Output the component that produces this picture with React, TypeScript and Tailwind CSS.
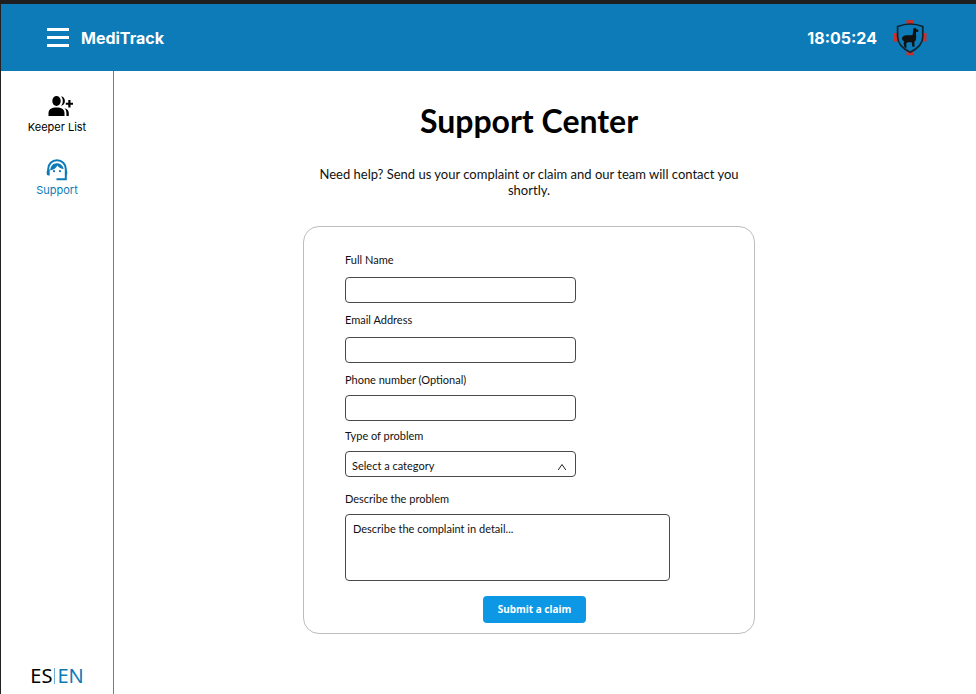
import React from "react";

const bodyFont = "font-[Lato,sans-serif]";
const labelFont = "font-['Noto_Sans',sans-serif]";
const inputStyle =
  "h-[26px] w-[231px] max-w-full rounded-[4px] border border-[#4a4a4a] bg-white px-1.5 text-[11px] text-[#111] outline-none";

function KeeperIcon() {
  return (
    <svg viewBox="0 0 26 22" className="ml-2 h-[22px] w-[26px]" fill="currentColor" aria-hidden="true">
      <ellipse cx="8.500" cy="6" rx="4.200" ry="5" />
      <path d="M.5 21v-3c0-3.800 3.400-5.500 8-5.500s8 1.700 8 5.500v3z" />
      <path d="M13 1.200c2.400.300 3.900 2.300 3.900 4.800s-1.500 4.500-3.900 4.800c1.200-1.200 1.800-2.900 1.800-4.800S14.200 2.400 13 1.200z" />
      <path d="M16.500 13.200c2.900.700 4.300 2.500 4.300 4.800v3h-2.400v-3c0-2-.7-3.600-1.900-4.800z" />
      <path d="M20.300 5h2.200v2.700H25v2.100h-2.500v2.700h-2.200V9.800h-2.500V7.700h2.500z" />
    </svg>
  );
}

function AgentIcon() {
  return (
    <svg viewBox="0 0 24 24" className="size-6" fill="none" stroke="currentColor" aria-hidden="true">
      <path d="M3.200 13.500V11C3.200 6 7 2.200 12 2.200S20.800 6 20.800 11v10.200H11.500" strokeWidth="2" />
      <path d="M3.500 11.500c-1.200.4-1.800 1.300-1.800 2.500v1.500c0 1.200.7 2 1.800 2h1.200v-6zM20.300 11.500c1.200.4 2 1.300 2 2.500v1.500c0 1.200-.8 2-2 2z" fill="currentColor" stroke="none" />
      <path d="M5.200 12.500C5.500 8 8 5.200 11.800 5.200c3.700 0 6.300 2.500 6.900 5.900-2.600 0-4.900-1.300-6.300-3.500-1.200 2.500-3.700 4.400-7.200 4.900z" fill="currentColor" stroke="none" />
      <circle cx="9" cy="13.200" r="1.100" fill="currentColor" stroke="none" />
      <circle cx="15" cy="13.200" r="1.100" fill="currentColor" stroke="none" />
    </svg>
  );
}

function LlamaLogo() {
  return (
    <svg viewBox="0 0 34 36" className="h-9 w-[34px]" role="img" aria-label="MediTrack">
      <path d="M13.500 0h7.500v7h-7.500zM13.500 28h7.500v7.300h-7.500zM1 13h7v8.500H1zM26 13h7.500v8.500H26z" fill="#c9302c" />
      <path
        d="M17.200 4c4.500 0 8.400.9 12.600 2.500v10c0 6.500-4.400 11.800-12.600 15.700C9 28.300 4.600 23 4.600 16.500v-10C8.800 4.900 12.700 4 17.200 4z"
        fill="#0d7bb7"
        stroke="#10242f"
        strokeWidth="1.700"
      />
      <path
        d="M20.900 7.500l.8.900.9-.9.500 1.500 2.400 1.100-.3 1.700-2.200.3c-.2 2.200.6 4.700 0 7.200-.3 1.300-1.100 2.100-1.700 2.900l.3 4.600h-2.100l-.8-4.600h-4l-1.500 1.300.4 4.300h-2l-1-4.400.6-2c-1-.5-2.300-1.600-2.200-2.900.2-2.600 2.200-3.300 4.700-3.300 2.300 0 4.400.4 5.900-.4.600-2.300.1-5.100 1.300-7.300z"
        fill="#111"
      />
    </svg>
  );
}

function Field({
  id,
  label,
  className,
  children,
}: {
  id: string;
  label: string;
  className: string;
  children: React.ReactNode;
}) {
  return (
    <div className={`flex flex-col items-start ${className}`}>
      <label htmlFor={id} className="text-[11px] leading-4 text-[#111]">
        {label}
      </label>
      {children}
    </div>
  );
}

export default function App() {
  return (
    <div className="flex min-h-screen flex-col border-l border-t-4 border-l-[#222] border-t-[#1f1f1f] bg-white font-[Inter,sans-serif] text-black">
      <header className="flex h-[67px] shrink-0 items-center bg-[#0d7bb7] pl-[46px] pr-[49px] text-white">
        <button type="button" aria-label="Open menu" className="mr-3 flex w-[22px] flex-col gap-[5px]">
          <span className="h-[3px] w-full bg-white" />
          <span className="h-[3px] w-full bg-white" />
          <span className="h-[3px] w-full bg-white" />
        </button>
        <span className="text-[16px] font-bold leading-6">MediTrack</span>
        <time className="ml-auto mr-4 text-[16px] font-bold leading-6">18:05:24</time>
        <LlamaLogo />
      </header>

      <div className="flex flex-1">
        <aside className="flex w-[113px] shrink-0 flex-col items-center border-r border-[#3f8fbd] pb-1.5 pt-6">
          <nav className="flex flex-col items-center gap-[23px] text-[11px] leading-4">
            <a href="#keepers" className="flex flex-col items-center gap-0.5">
              <KeeperIcon />
              Keeper List
            </a>
            <a href="#support" className="flex flex-col items-center text-[#0d7bb7]">
              <AgentIcon />
              Support
            </a>
          </nav>
          <div className={`mt-auto flex items-center text-[20px] leading-6 ${labelFont}`}>
            <button type="button">ES</button>
            <span className="mx-0.5 h-4 w-px bg-[#6fb0d6]" />
            <button type="button" className="text-[#0d7bb7]">EN</button>
          </div>
        </aside>

        <main className={`flex flex-1 flex-col items-center pl-4 pr-12 pt-7 ${bodyFont}`}>
          <h1 className="text-[32px] font-bold leading-[44px]">Support Center</h1>
          <p className="mt-[23px] max-w-[451px] text-center text-[13px] leading-4 text-[#111]">
            Need help? Send us your complaint or claim and our team will contact you shortly.
          </p>

          <form
            onSubmit={(e) => e.preventDefault()}
            className="mt-7 flex w-full max-w-[452px] flex-col rounded-2xl border border-[#bdbdbd] pb-2.5 pl-[41px] pr-10 pt-[25px]"
          >
            <Field id="name" label="Full Name" className="gap-[9px]">
              <input id="name" type="text" className={inputStyle} />
            </Field>
            <Field id="email" label="Email Address" className="mt-[9px] gap-[9px]">
              <input id="email" type="email" className={inputStyle} />
            </Field>
            <Field id="phone" label="Phone number (Optional)" className="mt-[9px] gap-[7px]">
              <input id="phone" type="tel" className={inputStyle} />
            </Field>
            <Field id="category" label="Type of problem" className="mt-[7px] gap-[7px]">
              <div className="relative">
                <select id="category" className={`${inputStyle} appearance-none pt-1`}>
                  <option>Select a category</option>
                </select>
                <svg
                  viewBox="0 0 10 8"
                  className="pointer-events-none absolute bottom-1.5 right-[9px] h-2 w-2.5"
                  fill="none"
                  stroke="#222"
                  aria-hidden="true"
                >
                  <path d="M1.200 7L5 1.500 8.800 7" />
                </svg>
              </div>
            </Field>
            <Field id="details" label="Describe the problem" className="mt-[14px] gap-[7px]">
              <textarea
                id="details"
                placeholder="Describe the complaint in detail..."
                className="h-[67px] w-[325px] max-w-full resize-none rounded-[4px] border border-[#4a4a4a] px-[7px] py-1.5 text-[11px] leading-4 outline-none placeholder:text-[#111]"
              />
            </Field>
            <button
              type="submit"
              className={`ml-2.5 mt-[15px] h-[27px] w-[103px] self-center rounded-[4px] bg-[#0c98e5] text-[10px] font-bold text-white ${labelFont}`}
            >
              Submit a claim
            </button>
          </form>
        </main>
      </div>
    </div>
  );
}
